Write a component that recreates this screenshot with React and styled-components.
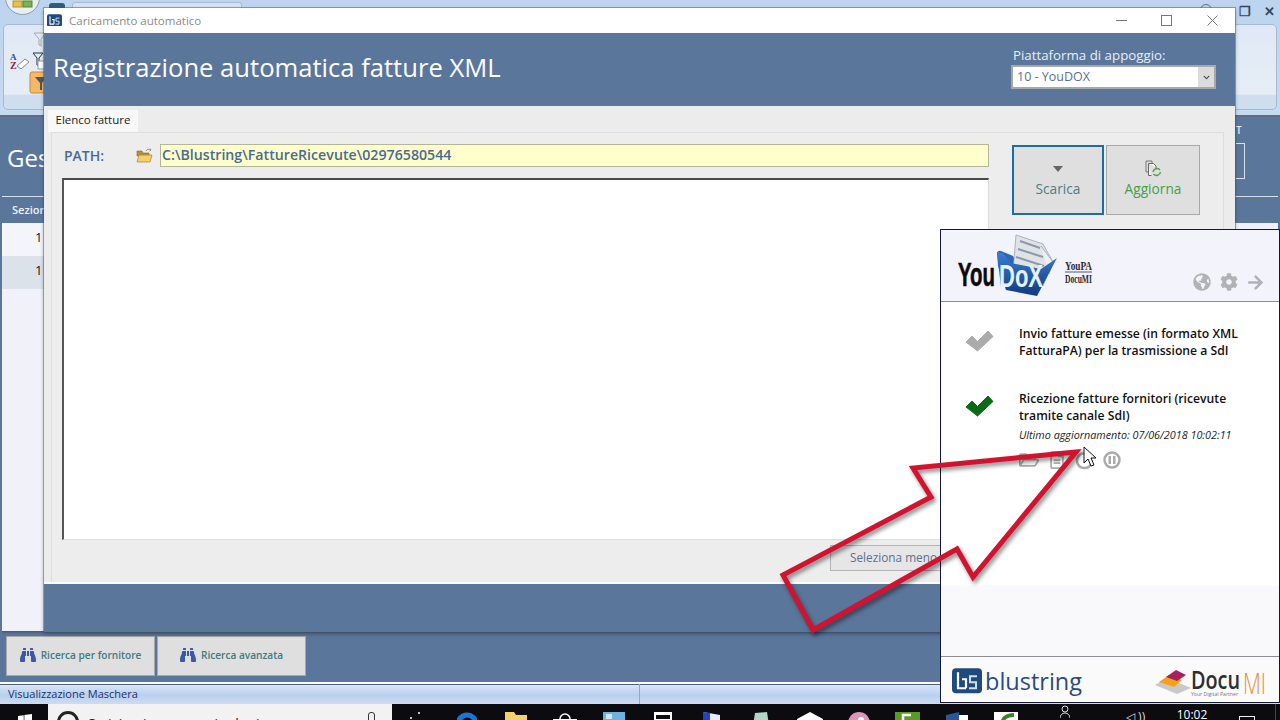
import React from 'react';
import styled, {createGlobalStyle} from 'styled-components';
import {FaGlobeAmericas, FaCog, FaArrowRight, FaRegFolderOpen, FaRegFileAlt, FaBinoculars, FaWindows, FaChevronDown} from 'react-icons/fa';

const UI_FONT = `"Open Sans", "Noto Sans", "Liberation Sans", sans-serif`;

const GlobalStyle = createGlobalStyle`
    html, body {
        margin: 0;
        padding: 0;
        background: #0c0c10;
        font-family: ${UI_FONT};
    }
`;

const BlustringMark = ({size}) => (
    <svg width={size} height={size * 0.85} viewBox="0 0 30 25">
        <rect x="0" y="0" width="30" height="25" rx="4" fill="#1f4a7d"/>
        <path d="M6 4v16h8M10 11h4v9" fill="none" stroke="#fff" strokeWidth="2.2"/>
        <path d="M25 8h-7v6h6v6h-7" fill="none" stroke="#cfe0f0" strokeWidth="2"/>
    </svg>
);

const FolderIcon = () => (
    <svg width="17" height="16" viewBox="0 0 17 16">
        <path d="M1 3h5l1 2h6v3H1z" fill="#b08f3a" stroke="#8a6d22" strokeWidth=".6"/>
        <path d="M1 14l2-7h13l-2 7z" fill="#f4cf6a" stroke="#a88525" strokeWidth=".7"/>
        <path d="M10 3c1-2 3-2 5-1l-1-1.500M15 2l-1.500 1" fill="none" stroke="#777" strokeWidth=".7"/>
    </svg>
);

const RefreshDocIcon = () => (
    <svg width="17" height="17" viewBox="0 0 17 17">
        <path d="M1 1h6v2" fill="none" stroke="#777"/>
        <path d="M1 1v11h2" fill="none" stroke="#777"/>
        <path d="M3.500 3.500h5l2.500 2.500v2M3.500 3.500v12h3" fill="#f3f3f3" stroke="#666"/>
        <path d="M8 12a4 4 0 0 1 7-2M15.500 12a4 4 0 0 1-7 2" fill="none" stroke="#4ea24e" strokeWidth="1.500"/>
    </svg>
);

const RefreshToolIcon = () => (
    <svg width="19" height="19" viewBox="0 0 19 19">
        <path d="M14.500 4a7.500 7.500 0 1 0 2.500 5.500" fill="none" stroke="#aaa" strokeWidth="2.500"/>
        <path d="M9 9l5-5v5z" fill="#aaa"/>
    </svg>
);

const PauseToolIcon = () => (
    <svg width="18" height="18" viewBox="0 0 18 18">
        <circle cx="9" cy="9" r="7.500" fill="none" stroke="#aaa" strokeWidth="2.500"/>
        <path d="M5.500 5h2.500v8H5.500zM10 5h2.500v8H10z" fill="#aaa"/>
    </svg>
);

const CheckMark = ({color}) => (
    <CheckSvg width="29" height="22" viewBox="0 0 29 22">
        <path d="M1 12l6-6 5.500 5.500L23 1l5 5.500L12.500 21z" fill={color} stroke={color} strokeLinejoin="round"/>
    </CheckSvg>
);

const YouDoxLogo = () => (
    <svg width="170" height="71" viewBox="940 230 170 71">
        <defs>
            <linearGradient id="folderBlue" x1="0" y1="0" x2="0" y2="1">
                <stop offset="0" stopColor="#3b7fd0"/>
                <stop offset="1" stopColor="#0f3a80"/>
            </linearGradient>
        </defs>
        <text x="957" y="286" fontFamily="Liberation Sans" fontWeight="700" fontSize="34" textLength="37" lengthAdjust="spacingAndGlyphs" fill="#0a0a0a" stroke="#0a0a0a" strokeWidth=".6">You</text>
        <path d="M996 253q1-3 4-2l12 5 4 6-16 25z" fill="#2a66b4"/>
        <path d="M1015 235l27 9 10 18-10 24-30-14z" fill="#dfe3e8" stroke="#9aa3ad" strokeWidth=".8"/>
        <path d="M1019 241l20 7M1017 249l25 8M1015 257l28 9M1013 265l28 9" stroke="#8d99a6" strokeWidth="2"/>
        <path d="M1040 246l12 16-4 12" fill="#eef0f2" stroke="#a6adb5"/>
        <path d="M996 252l6 1 8 10 30 6 16-11-20 38-31-6-8-24z" fill="url(#folderBlue)"/>
        <text x="998" y="287" fontFamily="Liberation Sans" fontWeight="700" fontSize="31" textLength="44" lengthAdjust="spacingAndGlyphs" fill="#e6f1fb">DoX</text>
        <text x="1064" y="270" fontFamily="Liberation Serif" fontWeight="700" fontSize="12.500" textLength="27" lengthAdjust="spacingAndGlyphs" fill="#2a2a33">YouPA</text>
        <rect x="1064" y="271.500" width="27" height="1" fill="#4a5a80"/>
        <text x="1064" y="283" fontFamily="Liberation Serif" fontWeight="700" fontSize="12.500" textLength="27" lengthAdjust="spacingAndGlyphs" fill="#2a2a33">DocuMI</text>
    </svg>
);

const DocumiLogo = () => (
    <svg width="113" height="30" viewBox="1157 669 113 30">
        <path d="M1157 686l12-7 24 10-14 6z" fill="#c9c9c9"/>
        <path d="M1161 683l10-7 13 5-8 7z" fill="#f4a21c"/>
        <path d="M1168 678l10-7 10 5-9 6z" fill="#a8205f"/>
        <text x="1193" y="690" fontFamily="Open Sans" fontWeight="600" fontSize="26" textLength="49" lengthAdjust="spacingAndGlyphs" fill="#2e2e2e">Docu</text>
        <text x="1245" y="695" fontFamily="Open Sans" fontWeight="300" fontSize="29" textLength="23" lengthAdjust="spacingAndGlyphs" fill="#e88f2e">MI</text>
        <text x="1193" y="697" fontFamily="Open Sans" fontSize="5" textLength="47" lengthAdjust="spacingAndGlyphs" fill="#777">Your Digital Partner</text>
    </svg>
);

const RedArrow = () => (
    <ArrowOverlay width="320" height="200" viewBox="775 445 320 200">
        <path
            d="M1076 452L913 468L931 497L783 575L813 630L957 549L973 577Z"
            fill="none"
            stroke="#d3122f"
            strokeWidth="5"
            strokeLinejoin="miter"
        />
    </ArrowOverlay>
);

const Pointer = () => (
    <PointerOverlay width="14" height="21" viewBox="0 0 14 21">
        <path d="M1 1v16l4-4 3 7 3-1-3-7h5z" fill="#fff" stroke="#111" strokeWidth="1"/>
    </PointerOverlay>
);

const taskIcons = [
    <svg width="16" height="16" viewBox="0 0 16 16" key="view"><path d="M1 7V1h14v6" fill="none" stroke="#fff" strokeWidth="1.5" strokeDasharray="2 11"/></svg>,
    <svg width="20" height="20" viewBox="0 0 20 20" key="edge"><path d="M1 12a9 9 0 0 1 18 0" fill="none" stroke="#1478d4" strokeWidth="5"/></svg>,
    <svg width="22" height="20" viewBox="0 0 22 20" key="folder"><path d="M0 0h9l2 3h11v17H0z" fill="#f1d06d"/></svg>,
    <svg width="24" height="20" viewBox="0 0 24 20" key="store"><path d="M0 7h24v13H0z" fill="#fff"/><path d="M7 7a5 5 0 0 1 10 0" fill="none" stroke="#fff" strokeWidth="1.500"/></svg>,
    <svg width="22" height="20" viewBox="0 0 22 20" key="photo"><rect width="22" height="20" fill="#6fb2e0"/><rect x="3" y="2" width="6" height="5" fill="#cfe7f6"/></svg>,
    <svg width="18" height="20" viewBox="0 0 18 20" key="window"><rect width="18" height="20" fill="#fff"/><rect x="2" y="3" width="14" height="4" fill="#0c0c10"/></svg>,
    <svg width="21" height="20" viewBox="0 0 21 20" key="screen"><path d="M2 0l17 3v17H2z" fill="#e8ecf8"/><path d="M2 0l7 1v10H2z" fill="#2340c8"/></svg>,
    <svg width="18" height="20" viewBox="0 0 18 20" key="paper"><path d="M3 1l12-1 3 20H0z" fill="#b4d4c8"/></svg>,
    <svg width="26" height="20" viewBox="0 0 26 20" key="house"><path d="M13 0l13 7v13H0V7z" fill="#fff"/></svg>,
    <svg width="24" height="20" viewBox="0 0 24 20" key="access"><circle cx="12" cy="11" r="11" fill="#d896b8"/><circle cx="14" cy="8" r="3" fill="#fff"/></svg>,
    <svg width="25" height="20" viewBox="0 0 25 20" key="green"><rect width="25" height="20" fill="#5c9a28"/><path d="M16 3H8v8" fill="none" stroke="#fff" strokeWidth="2.500"/></svg>,
    <svg width="22" height="20" viewBox="0 0 22 20" key="word"><path d="M0 3l13-3v20H0z" fill="#2b5797"/><rect x="13" y="3" width="9" height="6" fill="#fff"/></svg>,
    <svg width="24" height="20" viewBox="0 0 24 20" key="sheet"><rect width="24" height="20" fill="#fff"/><path d="M20 3C12 3 8 6 8 14" fill="none" stroke="#3f7d2a" strokeWidth="4"/></svg>,
];

const App = () => {
    return (
        <Screen>
            <GlobalStyle/>
            <AccessWindow>
                <Ribbon>
                    <Orb>
                        <svg width="22" height="35" viewBox="0 0 22 35">
                            <rect x="1" y="20" width="9" height="6" fill="#e7c24a" stroke="#b89422"/>
                            <rect x="11" y="20" width="9" height="6" fill="#7fb24a" stroke="#4f8a2a"/>
                        </svg>
                    </Orb>
                    <BackIcon/>
                    <BackTab/>
                    <RibbonPanel>
                        <SortIcons>
                            <svg width="40" height="62" viewBox="0 0 40 62">
                                <path d="M26 1h12l-5 6v7l-2-1V7z" fill="none" stroke="#aaa"/>
                                <text x="2" y="28" fontSize="9" fontWeight="700" fontFamily="Liberation Serif" fill="#2b4a90">A</text>
                                <text x="2" y="37" fontSize="10" fontWeight="700" fontFamily="Liberation Serif" fill="#90204a">Z</text>
                                <path d="M9 34l8-7 4 3-8 7z" fill="#fff" stroke="#888"/>
                                <path d="M25 21h10l-4 5v8l-2-1v-7z" fill="none" stroke="#333"/>
                                <rect x="30" y="29" width="10" height="8" fill="#fff" stroke="#99a"/>
                                <rect x="22" y="40" width="18" height="21" rx="2" fill="#f4b968" stroke="#c9883a"/>
                                <path d="M27 45h12l-5 6v7h-2v-7z" fill="#555"/>
                            </svg>
                        </SortIcons>
                    </RibbonPanel>
                    <HelpDot/>
                    <WindowGlyphs>
                        <span>❐</span>
                        <span>✕</span>
                    </WindowGlyphs>
                </Ribbon>
                <FormArea>
                    <FormHeader>
                        <FormTitle>Gestione</FormTitle>
                        <FormSide>
                            <SideLabel>T</SideLabel>
                            <SideBox/>
                        </FormSide>
                    </FormHeader>
                    <ColumnHead>Sezione</ColumnHead>
                    <ListArea>
                        <ListRow>1</ListRow>
                        <ListRow alt>1</ListRow>
                    </ListArea>
                    <FormFooter>
                        <SearchButton><FaBinoculars size={16} color="#3a5aa8"/>Ricerca per fornitore</SearchButton>
                        <SearchButton><FaBinoculars size={16} color="#3a5aa8"/>Ricerca avanzata</SearchButton>
                    </FormFooter>
                </FormArea>
                <StatusBar>
                    <StatusText>Visualizzazione Maschera</StatusText>
                </StatusBar>
            </AccessWindow>

            <Dialog>
                <TitleBar>
                    <BlustringMark size={15}/>
                    <WindowTitle>Caricamento automatico</WindowTitle>
                    <WindowControls>
                        <ControlButton><svg width="11" height="11" viewBox="0 0 11 11"><path d="M0 5.500h11" stroke="#777"/></svg></ControlButton>
                        <ControlButton><svg width="11" height="11" viewBox="0 0 11 11"><rect x=".5" y=".5" width="10" height="10" fill="none" stroke="#777"/></svg></ControlButton>
                        <ControlButton><svg width="11" height="11" viewBox="0 0 11 11"><path d="M.5.500l10 10M10.500.500l-10 10" stroke="#777"/></svg></ControlButton>
                    </WindowControls>
                </TitleBar>
                <DialogHeader>
                    <DialogTitle>Registrazione automatica fatture XML</DialogTitle>
                    <PlatformBox>
                        <PlatformLabel>Piattaforma di appoggio:</PlatformLabel>
                        <PlatformSelect>
                            <PlatformValue>10 - YouDOX</PlatformValue>
                            <SelectArrow><FaChevronDown size={7} color="#444"/></SelectArrow>
                        </PlatformSelect>
                    </PlatformBox>
                </DialogHeader>
                <DialogBody>
                    <TabStrip>
                        <Tab>Elenco fatture</Tab>
                    </TabStrip>
                    <TabPage>
                        <MainColumn>
                            <PathRow>
                                <PathLabel>PATH:</PathLabel>
                                <PathIcon><FolderIcon/></PathIcon>
                                <PathInput>C:\Blustring\FattureRicevute\02976580544</PathInput>
                            </PathRow>
                            <InvoiceList/>
                            <ListActions>
                                <SelectButton>Seleziona meno</SelectButton>
                            </ListActions>
                        </MainColumn>
                        <SideActions>
                            <ActionButton focused>
                                <DownTriangle/>
                                Scarica
                            </ActionButton>
                            <ActionButton green>
                                <RefreshDocIcon/>
                                Aggiorna
                            </ActionButton>
                        </SideActions>
                    </TabPage>
                </DialogBody>
            </Dialog>

            <Popup>
                <PopupHeader>
                    <YouDoxLogo/>
                    <HeaderTools>
                        <FaGlobeAmericas size={18}/>
                        <FaCog size={18}/>
                        <FaArrowRight size={17}/>
                    </HeaderTools>
                </PopupHeader>
                <PopupBody>
                    <ServiceRow>
                        <CheckMark color="#ababab"/>
                        <ServiceInfo>
                            <ServiceText>Invio fatture emesse (in formato XML<br/>FatturaPA) per la trasmissione a SdI</ServiceText>
                        </ServiceInfo>
                    </ServiceRow>
                    <ServiceRow>
                        <CheckMark color="#0b6b14"/>
                        <ServiceInfo>
                            <ServiceText>Ricezione fatture fornitori (ricevute<br/>tramite canale SdI)</ServiceText>
                            <LastUpdate>Ultimo aggiornamento: 07/06/2018 10:02:11</LastUpdate>
                            <ToolRow>
                                <FaRegFolderOpen size={20}/>
                                <FaRegFileAlt size={18}/>
                                <RefreshToolIcon/>
                                <PauseToolIcon/>
                            </ToolRow>
                        </ServiceInfo>
                    </ServiceRow>
                </PopupBody>
                <PopupFooter>
                    <BrandLeft>
                        <BlustringMark size={30}/>
                        <BrandName>blustring</BrandName>
                    </BrandLeft>
                    <DocumiLogo/>
                </PopupFooter>
            </Popup>

            <RedArrow/>
            <Pointer/>

            <Taskbar>
                <StartSlot><FaWindows size={16} color="#fff"/></StartSlot>
                <SearchBox>
                    <SearchCircle/>
                    <SearchHint>Scrivi qui per eseguire la ricerca</SearchHint>
                    <MicShape/>
                </SearchBox>
                <TaskIcons>
                    {taskIcons.map((icon, i) => <TaskSlot key={i}>{icon}</TaskSlot>)}
                </TaskIcons>
                <Tray>
                    <svg width="10" height="14" viewBox="0 0 10 14"><circle cx="5" cy="5" r="3" fill="none" stroke="#ddd"/><path d="M0 14a5 5 0 0 1 10 0" fill="none" stroke="#ddd"/></svg>
                    <SpeakerMark>◁ ))</SpeakerMark>
                    <Clock>10:02<br/>07/06/2018</Clock>
                    <NotifyBox/>
                </Tray>
            </Taskbar>
        </Screen>
    )
}

const Screen = styled.div`
    position: relative;
    width: 1280px;
    height: 720px;
    overflow: hidden;
    background: #0c0c10;
`;

const AccessWindow = styled.div`
    display: flex;
    flex-direction: column;
    height: 704px;
`;

const Ribbon = styled.div`
    position: relative;
    height: 117px;
    flex: none;
    box-sizing: border-box;
    padding: 24px 3px 5px 3px;
    background: linear-gradient(#bcd4ef, #c6daf1);
    border-bottom: 2px solid #5f6b80;
`;

const Orb = styled.div`
    position: absolute;
    left: 5px;
    top: -20px;
    width: 35px;
    height: 35px;
    box-sizing: border-box;
    display: flex;
    justify-content: center;
    border-radius: 50%;
    background: #e9eef3;
    border: 1px solid #8c9bb0;
`;

const BackIcon = styled.div`
    position: absolute;
    left: 49px;
    top: 3px;
    width: 16px;
    height: 8px;
    border-radius: 3px 3px 0 0;
    background: #2a5f86;
`;

const BackTab = styled.div`
    position: absolute;
    left: 72px;
    top: 2px;
    width: 168px;
    height: 8px;
    border: 1px solid #a9b9ce;
    border-radius: 3px 3px 0 0;
    background: #d4e2f3;
`;

const RibbonPanel = styled.div`
    height: 100%;
    box-sizing: border-box;
    border: 1px solid #a9bad0;
    border-radius: 5px;
    background: linear-gradient(#dfe9f5 0, #e6edf6 82%, #cfdeef 84%);
`;

const SortIcons = styled.div`
    padding: 7px 0 0 4px;
`;

const HelpDot = styled.div`
    position: absolute;
    right: 68px;
    top: 4px;
    width: 10px;
    height: 10px;
    border: 1px solid #5a6f8c;
    border-radius: 50%;
`;

const WindowGlyphs = styled.div`
    position: absolute;
    right: 5px;
    top: 2px;
    display: flex;
    gap: 13px;
    font-size: 13px;
    font-weight: 700;
    color: #33465f;
`;

const FormArea = styled.div`
    flex: 1;
    display: flex;
    flex-direction: column;
    background: #5b769b;
    padding: 0 2px;
    min-height: 0;
`;

const FormHeader = styled.div`
    height: 80px;
    flex: none;
    box-sizing: border-box;
    display: flex;
    justify-content: space-between;
    padding-left: 5px;
    border-bottom: 1px solid #d7e0ec;
`;

const FormTitle = styled.div`
    color: #fff;
    font-size: 24px;
    line-height: 82px;
`;

const FormSide = styled.div`
    width: 42px;
    padding-top: 6px;
`;

const SideLabel = styled.div`
    color: #e8edf4;
    font-size: 10px;
    font-weight: 600;
    line-height: 14px;
`;

const SideBox = styled.div`
    width: 8px;
    height: 34px;
    margin-top: 6px;
    border: 1px solid #d9e1ec;
    border-left: none;
`;

const ColumnHead = styled.div`
    height: 26px;
    flex: none;
    padding-left: 10px;
    color: #eef2f7;
    font-size: 11px;
    font-weight: 600;
    line-height: 26px;
`;

const ListArea = styled.div`
    flex: 1;
    background: #f0f1f9;
`;

const ListRow = styled.div`
    height: 33px;
    width: 42px;
    box-sizing: border-box;
    background: ${props => props.alt ? '#dbe2ea' : '#f4f5fb'};
    color: #111;
    font-size: 13px;
    line-height: 29px;
    padding-left: 33px;
`;

const FormFooter = styled.div`
    height: 51px;
    flex: none;
    display: flex;
    gap: 2px;
    padding: 5px 0 6px 4px;
    box-sizing: border-box;
    box-shadow: inset 0 3px 3px -2px rgba(30, 45, 70, .5);
`;

const SearchButton = styled.div`
    width: 149px;
    box-sizing: border-box;
    display: flex;
    align-items: center;
    justify-content: center;
    gap: 5px;
    padding-bottom: 2px;
    background: #dfdfdf;
    border: 1px solid #a9a9a9;
    color: #3f7a82;
    font-size: 10.1px;
    font-weight: 600;
`;

const StatusBar = styled.div`
    height: 22px;
    flex: none;
    box-sizing: border-box;
    border-top: 2px solid #fff;
    box-shadow: inset 0 1px 0 #50607a;
    background: linear-gradient(#dbe8f8, #b9d0ee 55%, #ccdcf3);
    padding-left: 8px;
    display: flex;
    align-items: center;
`;

const StatusText = styled.div`
    width: 631px;
    color: #1d2f70;
    font-size: 11px;
    line-height: 20px;
    border-right: 1px solid #9aa7bb;
`;

const Dialog = styled.div`
    position: absolute;
    left: 44px;
    top: 8px;
    width: 1191px;
    height: 624px;
    display: flex;
    flex-direction: column;
    background: #5b769b;
    box-shadow: 0 0 0 1px rgba(70, 80, 100, .45), 0 2px 4px rgba(30, 40, 60, .4);
`;

const TitleBar = styled.div`
    height: 25px;
    flex: none;
    box-sizing: border-box;
    display: flex;
    align-items: center;
    padding: 0 0 1px 3px;
    background: #fff;
`;

const WindowTitle = styled.div`
    margin-left: 7px;
    color: #8a8a8a;
    font-size: 11.5px;
`;

const WindowControls = styled.div`
    margin-left: auto;
    display: flex;
`;

const ControlButton = styled.div`
    width: 45.5px;
    display: flex;
    justify-content: center;
`;

const DialogHeader = styled.div`
    height: 73px;
    flex: none;
    box-sizing: border-box;
    display: flex;
    justify-content: space-between;
    padding: 13px 19px 0 9px;
`;

const DialogTitle = styled.div`
    color: #fff;
    font-size: 25.6px;
    line-height: 44px;
`;

const PlatformBox = styled.div`
    width: 205px;
`;

const PlatformLabel = styled.div`
    padding-left: 2px;
    color: #e8eef6;
    font-size: 13.3px;
    line-height: 19px;
`;

const PlatformSelect = styled.div`
    height: 24px;
    box-sizing: border-box;
    display: flex;
    border: 2px solid #a8a8a8;
    background: #fff;
`;

const PlatformValue = styled.div`
    flex: 1;
    padding-left: 4px;
    color: #5a6f92;
    font-size: 12.5px;
    line-height: 20px;
`;

const SelectArrow = styled.div`
    width: 16px;
    display: flex;
    align-items: center;
    justify-content: center;
    background: #dcdcdc;
`;

const DialogBody = styled.div`
    height: 478px;
    flex: none;
    box-sizing: border-box;
    display: flex;
    flex-direction: column;
    padding: 4px 11px 0 4px;
    background: #ececec;
    border-bottom: 2px solid #fbfbfb;
`;

const TabStrip = styled.div`
    height: 22px;
    flex: none;
    display: flex;
`;

const Tab = styled.div`
    width: 90px;
    height: 22px;
    background: #f8f8f8;
    color: #222;
    font-size: 11.5px;
    line-height: 20px;
    text-align: center;
`;

const TabPage = styled.div`
    flex: 1;
    display: flex;
    gap: 23px;
    margin-left: 3px;
    padding: 11px 0 0 10px;
    background: #ededed;
    border: 1px solid #dedede;
    border-bottom: none;
    min-height: 0;
`;

const MainColumn = styled.div`
    width: 927px;
    display: flex;
    flex-direction: column;
`;

const PathRow = styled.div`
    height: 23px;
    flex: none;
    display: flex;
    align-items: center;
`;

const PathLabel = styled.div`
    width: 74px;
    padding-left: 2px;
    box-sizing: border-box;
    color: #4a6a94;
    font-size: 14px;
    font-weight: 600;
    line-height: 26px;
`;

const PathIcon = styled.div`
    width: 24px;
    display: flex;
`;

const PathInput = styled.div`
    flex: 1;
    height: 23px;
    box-sizing: border-box;
    padding-left: 1px;
    background: #ffffcc;
    border: 1px solid #b5b59a;
    color: #4a6a94;
    font-size: 14.2px;
    font-weight: 600;
    line-height: 19px;
`;

const InvoiceList = styled.div`
    height: 362px;
    flex: none;
    box-sizing: border-box;
    margin-top: 11px;
    background: #fff;
    border: 1px solid #dedede;
    border-top: 2px solid #4a4a4a;
    border-left: 2px solid #555;
`;

const ListActions = styled.div`
    display: flex;
    justify-content: flex-end;
    margin-top: 5px;
`;

const SelectButton = styled.div`
    width: 159px;
    height: 26px;
    box-sizing: border-box;
    padding-left: 19px;
    background: #e6e6e6;
    border: 1px solid #b4b4b4;
    color: #5b7092;
    font-size: 11.8px;
    line-height: 23px;
`;

const SideActions = styled.div`
    display: flex;
    gap: 2px;
    align-items: flex-start;
    padding-top: 1px;
`;

const ActionButton = styled.div`
    width: ${props => props.green ? '94px' : '92px'};
    height: 70px;
    box-sizing: border-box;
    display: flex;
    flex-direction: column;
    align-items: center;
    justify-content: flex-end;
    gap: 2px;
    padding-bottom: ${props => props.green ? '16px' : '15px'};
    background: #dfdfdf;
    border: ${props => props.focused ? '2px solid #1a6ea8' : '1px solid #a9a9a9'};
    color: ${props => props.green ? '#3fa33f' : '#4b7d87'};
    font-size: 13.7px;
`;

const DownTriangle = styled.div`
    width: 0;
    height: 0;
    margin-bottom: 5px;
    border-left: 5px solid transparent;
    border-right: 5px solid transparent;
    border-top: 6px solid #666;
`;

const Popup = styled.div`
    position: absolute;
    left: 940px;
    top: 229px;
    width: 340px;
    height: 474px;
    box-sizing: border-box;
    display: flex;
    flex-direction: column;
    background: #fff;
    border: 1px solid #14163a;
`;

const PopupHeader = styled.div`
    position: relative;
    height: 72px;
    flex: none;
    box-sizing: border-box;
    background: #f3f3fb;
    border-bottom: 1px solid #8d8d94;
`;

const HeaderTools = styled.div`
    position: absolute;
    right: 15px;
    top: 43px;
    display: flex;
    align-items: center;
    gap: 9px;
    color: #b2b2b6;
`;

const PopupBody = styled.div`
    flex: 1;
    display: flex;
    flex-direction: column;
    gap: 31px;
    padding: 23px 0 0 24px;
    background: linear-gradient(#fff 0, #fff 283px, #f9f9fb 284px);
`;

const ServiceRow = styled.div`
    display: flex;
    gap: 25px;
    align-items: flex-start;
`;

const CheckSvg = styled.svg`
    flex: none;
    margin-top: 5px;
`;

const ServiceInfo = styled.div`
    display: flex;
    flex-direction: column;
`;

const ServiceText = styled.div`
    color: #111;
    font-size: 12.2px;
    font-weight: 600;
    line-height: 17px;
`;

const LastUpdate = styled.div`
    margin-top: 2px;
    color: #222;
    font-size: 10.8px;
    font-style: italic;
    line-height: 17px;
`;

const ToolRow = styled.div`
    display: flex;
    align-items: center;
    gap: 9px;
    margin-top: 7px;
    color: #aaa;
`;

const PopupFooter = styled.div`
    height: 46px;
    flex: none;
    box-sizing: border-box;
    display: flex;
    justify-content: space-between;
    align-items: flex-end;
    padding: 0 11px 4px 11px;
    background: #fafafb;
    border-top: 1px solid #8d8d94;
`;

const BrandLeft = styled.div`
    display: flex;
    align-items: center;
    gap: 3px;
    padding-bottom: 4px;
`;

const BrandName = styled.div`
    color: #2b4a7e;
    font-size: 23.5px;
    line-height: 26px;
`;

const ArrowOverlay = styled.svg`
    position: absolute;
    left: 775px;
    top: 445px;
    filter: drop-shadow(2px 3px 2px rgba(0, 0, 0, .45));
`;

const PointerOverlay = styled.svg`
    position: absolute;
    left: 1083px;
    top: 446px;
`;

const Taskbar = styled.div`
    height: 40px;
    display: flex;
    background: #0c0c10;
    color: #fff;
`;

const StartSlot = styled.div`
    width: 48px;
    flex: none;
    box-sizing: border-box;
    padding: 8px 0 0 17px;
`;

const SearchBox = styled.div`
    width: 344px;
    flex: none;
    box-sizing: border-box;
    position: relative;
    display: flex;
    padding: 7px 0 0 9px;
    background: #f2f2f2;
`;

const SearchCircle = styled.div`
    width: 16px;
    height: 16px;
    flex: none;
    border: 3px solid #222;
    border-radius: 50%;
`;

const SearchHint = styled.div`
    margin-left: 9px;
    color: #222;
    font-size: 14px;
    line-height: 26px;
`;

const MicShape = styled.div`
    position: absolute;
    right: 17px;
    top: 8px;
    width: 5px;
    height: 12px;
    border: 1px solid #333;
    border-radius: 3px;
`;

const TaskIcons = styled.div`
    display: flex;
    margin-left: 1px;
`;

const TaskSlot = styled.div`
    width: 49px;
    display: flex;
    justify-content: center;
    padding-top: 8px;
`;

const Tray = styled.div`
    flex: 1;
    display: flex;
    align-items: flex-start;
    padding-left: 30px;
    box-sizing: border-box;
    border-right: 1px solid #444;
    margin-right: 4px;
`;

const SpeakerMark = styled.div`
    margin: 4px 0 0 56px;
    color: #ddd;
    font-size: 12px;
    width: 24px;
`;

const Clock = styled.div`
    margin: 3px 0 0 13px;
    width: 58px;
    text-align: center;
    font-size: 12px;
    line-height: 15px;
`;

const NotifyBox = styled.div`
    width: 14px;
    height: 14px;
    margin: 12px 0 0 18px;
    border: 1px solid #eee;
`;

export default App;
